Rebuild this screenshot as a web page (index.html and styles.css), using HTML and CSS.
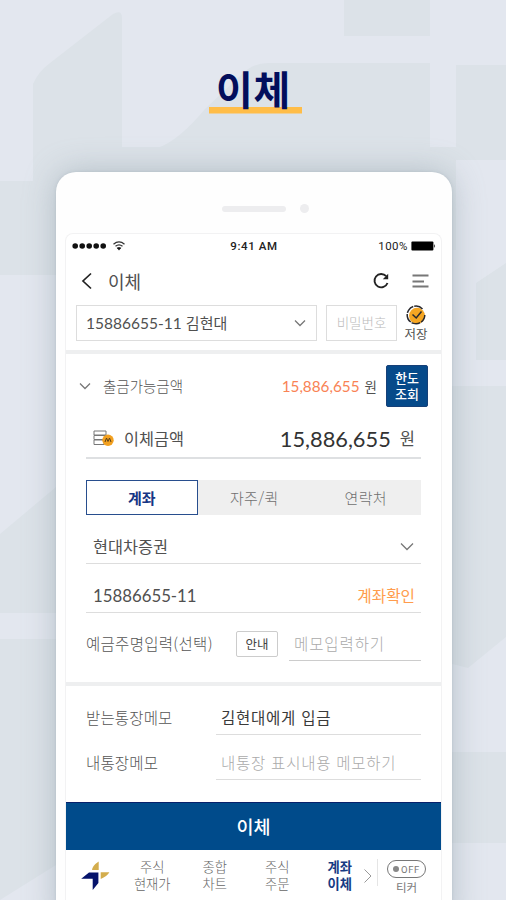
FILE: index.html
```html
<!DOCTYPE html>
<html lang="ko">
<head>
<meta charset="utf-8">
<title>이체</title>
<link rel="stylesheet" href="styles.css">
</head>
<body>
<div class="page">
  <svg class="backdrop" viewBox="0 0 506 900" aria-hidden="true">
    <path d="M344 0H430V36H344zM33 84Q38 72 50 63L113 14Q122 9 122 18V147H160Q180 139 205 109L240 76Q252 63 268 63H430V147H456V65H506V160H456V250H33z"/>
    <path d="M0 181H56V275H0zM0 534L56 487V613H0zM0 639H56V865L0 900zM476 283L506 263V360H476zM452 386H506V637L468 668L452 664zM452 752H506V843H452z"/>
  </svg>
  <h1 class="title"><span>이체</span></h1>
  <main class="phone">
    <div class="speaker"><i class="slot"></i><i class="camera"></i></div>
    <div class="screen">
      <div class="status">
        <svg class="signal" width="56" height="12" viewBox="0 0 56 12"><circle cx="3.2" cy="6" r="2.8"/><circle cx="10.2" cy="6" r="2.8"/><circle cx="17.2" cy="6" r="2.8"/><circle cx="24.2" cy="6" r="2.8"/><circle cx="31.2" cy="6" r="2.8"/><path class="wave" d="M41.500 4.2Q47 -.3 52.500 4.2M43.500 6.3Q47 3.500 50.500 6.3M45 8.2Q47 7 49 8.2"/><path d="M45 8L47 10.5 49 8z"/></svg>
        <span class="clock">9:41 AM</span>
        <span class="battery">100%<svg width="25" height="10" viewBox="0 0 25 10"><rect x=".4" y=".5" width="22" height="9" rx="1"/><path d="M23.2 3Q25 5 23.2 7z"/></svg></span>
      </div>
      <header class="header">
        <svg class="back" width="12" height="18" viewBox="0 0 12 18"><path d="M10 1.5L2 9l8 7.5"/></svg>
        <h2>이체</h2>
        <svg class="refresh" width="18" height="18" viewBox="0 0 18 18"><path d="M14.2 4.2A6.7 6.7 0 1 0 15.5 11"/><path class="tip" d="M16.2 1.8V7.2H10.8z"/></svg>
        <svg class="menu" width="17" height="16" viewBox="0 0 17 16"><path d="M.5 2.500H16.5M.5 8.500H12M.5 13.500H16.5"/></svg>
      </header>
      <div class="account">
        <div class="select"><span><b class="num">15886655-11</b> 김현대</span><svg class="chev" width="12" height="8" viewBox="0 0 12 8"><path d="M1 1.5l5 5 5-5"/></svg></div>
        <div class="password">비밀번호</div>
        <div class="save"><svg width="20" height="20" viewBox="0 0 20 20"><circle cx="11" cy="10.8" r="8"/><path class="ring" d="M16.5 4A8.8 8.8 0 1 0 18.8 10M17 15.2l1.2-2"/><path class="check" d="M6.5 9.5l3.7 3.5L15.5 6.5"/></svg><span>저장</span></div>
      </div>
      <section class="transfer">
        <div class="available">
          <svg class="chev" width="12" height="8" viewBox="0 0 12 8"><path d="M1 1.5l5 5 5-5"/></svg>
          <span class="label">출금가능금액</span>
          <span class="money">15,886,655</span><span class="won">원</span>
          <button class="limit">한도<br>조회</button>
        </div>
        <div class="amount">
          <svg width="23" height="18" viewBox="0 0 23 18"><path class="stack" d="M2 2H14V6H2zM2 6.5H14V10.5H2zM2 11H12V15.5H2z"/><circle cx="16" cy="11.3" r="5.7"/><path class="mark" d="M13 13l1.5-4 1.5 3.5L17.5 9 19 13"/></svg>
          <span class="label">이체금액</span>
          <span class="money">15,886,655</span><span class="won">원</span>
        </div>
        <div class="tabs"><span class="active">계좌</span><span>자주/퀵</span><span>연락처</span></div>
        <div class="field bank"><span>현대차증권</span><svg class="chev" width="14" height="9" viewBox="0 0 14 9"><path d="M1 1.5l6 6 6-6"/></svg></div>
        <div class="field number"><span class="num">15886655-11</span><span class="confirm">계좌확인</span></div>
        <div class="owner"><span class="label">예금주명입력(선택)</span><button>안내</button><span class="input">메모입력하기</span></div>
      </section>
      <section class="memos">
        <div class="memo"><span class="label">받는통장메모</span><span class="input filled">김현대에게 입금</span></div>
        <div class="memo"><span class="label">내통장메모</span><span class="input">내통장 표시내용 메모하기</span></div>
      </section>
      <button class="submit">이체</button>
      <nav class="nav">
        <svg class="logo" width="30" height="30" viewBox="0 0 30 30"><path class="gold" d="M18.700 1.500V10H12Q12.500 5.500 18.700 1.500zM20.700 12.300H29.400Q27 16.500 20.700 19z"/><path d="M9 12.500H18.400V23L12.700 30V18.700H1.200z"/></svg>
        <a>주식<br>현재가</a><a>종합<br>차트</a><a>주식<br>주문</a><a class="current">계좌<br>이체</a>
        <svg class="next" width="10" height="16" viewBox="0 0 10 16"><path d="M1.5 1.5L8 8l-6.500 6.500"/></svg>
        <div class="ticker"><span class="toggle"><i></i>OFF</span><span>티커</span></div>
      </nav>
    </div>
  </main>
</div>
</body>
</html>
```
FILE: styles.css
```css
* { box-sizing: border-box; }
body { margin: 0; font-family: "Noto Sans CJK KR", sans-serif; color: #505050; }
h1, h2 { margin: 0; }
button { padding: 0; border: 0; font: inherit; }
svg { display: block; flex: none; fill: none; }
span, a { white-space: nowrap; }
.page { position: relative; width: 506px; height: 900px; overflow: hidden; background: #e3e7ef; }
.backdrop { position: absolute; inset: 0; width: 506px; height: 900px; fill: #dce2e8; }
.title { position: relative; height: 172px; padding: 69px 0 0 209px; }
.title span { display: block; width: 93px; height: 45px; padding-left: 7px; font-size: 40px; line-height: 38px; letter-spacing: .7px; font-weight: 700; color: #020e5c; background: linear-gradient(#ffbd48, #ffbd48) 0 38px / 93px 6.500px no-repeat; }
.phone { position: relative; width: 396px; height: 760px; margin-left: 56px; padding: 0 9px; background: #fefefe; border-radius: 20px; box-shadow: 0 0 32px rgba(125, 143, 153, .45), 0 0 3px rgba(150, 165, 175, .35); }
.speaker { height: 61px; display: flex; align-items: center; gap: 14px; padding: 12px 0 0 157px; }
.slot { width: 64px; height: 6px; border-radius: 3px; background: #ededef; }
.camera { width: 9px; height: 9px; border-radius: 50%; background: #ededef; }
.screen { width: 377px; border: 1px solid #f2f2f3; border-bottom: 0; border-radius: 8px 8px 0 0; background: #fff; }

.status { height: 23px; display: grid; grid-template-columns: 1fr auto 1fr; align-items: center; padding: 0 5px 0 6px; font: 500 11.500px Roboto, sans-serif; color: #222; }
.signal { fill: #111; }
.signal .wave { fill: none; stroke: #333; stroke-width: 1.300; }
.clock { letter-spacing: .6px; }
.battery { display: flex; align-items: center; justify-content: flex-end; gap: 3px; font-weight: 400; letter-spacing: .5px; }
.battery svg { fill: #000; }

.header { height: 47px; display: flex; align-items: center; padding: 1px 12px 0 15px; }
.back { stroke: #222; stroke-width: 1.700; }
.header h2 { margin-left: 15px; font-size: 18px; line-height: 24px; font-weight: 400; flex: 1; }
.refresh { stroke: #222; stroke-width: 1.900; }
.refresh .tip { fill: #222; stroke: none; }
.menu { margin-left: 22px; stroke: #777; stroke-width: 2; }

.account { display: flex; align-items: flex-start; height: 50px; padding: 1px 0 0 10px; border-bottom: 4px solid #eeeff0; }
.select { width: 241px; height: 36px; display: flex; align-items: center; justify-content: space-between; padding: 0 10px 1px 9px; border: 1px solid #ddd; font-size: 15px; }
.num { font-family: Lato, sans-serif; font-weight: 400; letter-spacing: 0; }
.select .num { font-size: 15.500px; }
.chev { stroke: #777; stroke-width: 1.300; }
.password { width: 71px; height: 36px; margin-left: 9px; border: 1px solid #ddd; text-align: center; font-size: 13.500px; line-height: 33px; color: #bbb; font-weight: 300; }
.save { width: 38px; display: flex; flex-direction: column; align-items: center; font-size: 12.500px; line-height: 17px; }
.save svg { fill: #f5a623; }
.save .ring, .save .check { fill: none; stroke: #29292e; stroke-width: 1.500; }
.save .ring { stroke-dasharray: 9 1; }

.transfer { height: 332px; padding: 11px 13px 0 20px; border-bottom: 4px solid #eeeff0; }
.available { height: 42px; display: flex; align-items: center; font-size: 14.500px; margin-left: -7px; }
.available .label { margin-left: 12px; flex: 1; font-size: 14.500px; font-weight: 300; line-height: 20px; padding-bottom: 1px; color: #555; }
.money { font-family: Lato, sans-serif; }
.available .money { font-size: 15.300px; color: #f98355; }
.available .won { margin-left: 5px; font-size: 13.500px; line-height: 20px; padding-bottom: 1px; }
.limit { width: 42px; height: 42px; margin-left: 9px; border: 1px solid #164078; border-radius: 2px; background: #064a8a; color: #fff; font-size: 13px; line-height: 16px; font-weight: 500; }
.amount { height: 52px; width: 335px; display: flex; align-items: center; padding: 12px 6px 0 6px; border-bottom: 2px solid #dee0e2; }
.amount svg { fill: #f2a01f; }
.amount .stack, .amount .mark { fill: none; stroke: #777; }
.amount .mark { stroke: #59401b; }
.amount .label { margin-left: 9px; flex: 1; font-size: 16.300px; }
.amount .money { font-size: 21.800px; color: #333; }
.amount .won { margin-left: 9px; font-size: 16.500px; }
.tabs { width: 335px; height: 35px; margin-top: 21px; display: flex; background: #efefef; }
.tabs span { width: 111.500px; text-align: center; font-size: 15px; line-height: 35px; color: #888; }
.tabs span + span { letter-spacing: .3px; padding-left: 2px; font-weight: 300; color: #6f6f6f; }
.tabs .active { border: 1.500px solid #284e8e; background: #fff; line-height: 33px; color: #173584; font-weight: 700; }
.field { width: 335px; height: 49px; display: flex; align-items: center; justify-content: space-between; padding: 14px 6px 0 7px; border-bottom: 1px solid #ddd; font-size: 16.300px; }
.bank .chev { margin-right: 1px; }
.number .num { font-size: 16.800px; }
.confirm { font-size: 15.700px; color: #ff9c4d; }
.owner { width: 335px; height: 48px; display: flex; align-items: flex-end; font-size: 15.500px; font-weight: 300; }
.owner .label { width: 150px; line-height: 36px; letter-spacing: .3px; color: #555; }
.owner button { width: 42px; height: 26px; margin-bottom: 4px; border: 1px solid #ccc; border-radius: 2px; background: #fff; font-size: 12.500px; line-height: 22px; font-weight: 400; color: #444; }
.owner .input { width: 132px; height: 37px; margin-left: 11px; padding-left: 5px; line-height: 38px; letter-spacing: .9px; border-bottom: 1px solid #ccc; color: #aaa; }

.memos { height: 116px; padding: 13px 20px 0; }
.memo { height: 36px; display: flex; font-size: 15.500px; line-height: 36px; margin-bottom: 9px; }
.memo .label { width: 130px; font-weight: 300; letter-spacing: .15px; color: #555; }
.memo .input { width: 205px; padding-left: 5px; border-bottom: 1px solid #ddd; font-weight: 300; letter-spacing: .75px; color: #aaa; }
.memo .filled { font-weight: 400; color: #3a3a3a; }
.submit { display: block; width: 375px; height: 48px; padding-bottom: 1px; border-top: 1px solid #07206b; background: #004b8b; color: #fff; font-size: 18.500px; line-height: 46px; font-weight: 500; }
.nav { height: 60px; display: flex; align-items: flex-start; padding: 9px 0 0 14px; }
.logo { margin-top: 1px; fill: #06136b; }
.logo .gold { fill: #d3ad4d; }
.nav a { width: 62.500px; text-align: center; font-size: 13.300px; line-height: 16.500px; font-weight: 300; color: #666; }
.logo + a { margin-left: 11px; }
.nav .current { color: #173a83; font-weight: 700; }
.next { margin: 9px 0 0 -8px; stroke: #999; }
.ticker { display: flex; flex-direction: column; align-items: center; width: 58px; height: 27px; margin-left: 4px; border-left: 1px solid #e5e5e5; font-size: 11.500px; line-height: 18px; color: #777; }
.toggle { display: flex; align-items: center; justify-content: center; gap: 2px; width: 39px; height: 18px; margin-top: 1px; border: 1.500px solid #777; border-radius: 9px; font: 9.500px Roboto, sans-serif; letter-spacing: .6px; flex: none; }
.toggle i { width: 6px; height: 6px; border-radius: 50%; background: #888; }
```
